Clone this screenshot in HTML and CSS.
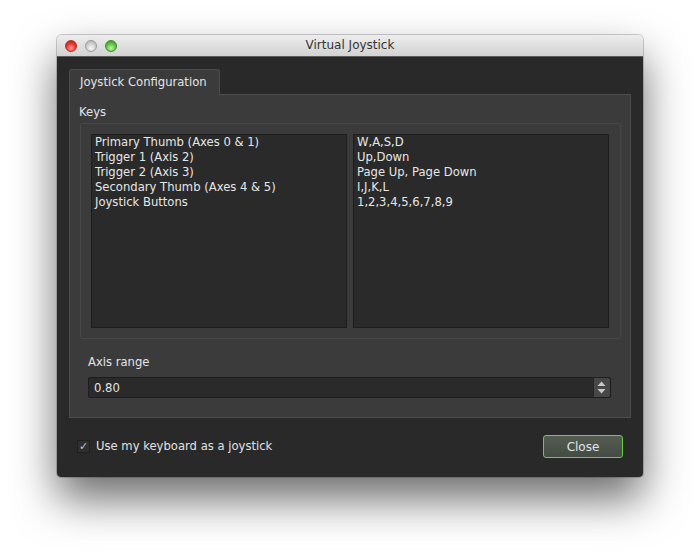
FILE: index.html
```html
<!DOCTYPE html>
<html>
<head>
<meta charset="utf-8">
<link rel="stylesheet" href="styles.css">
</head>
<body>
<div class="window">
  <div class="titlebar">
    <div class="lights">
      <span class="light red"></span>
      <span class="light gray"></span>
      <span class="light green"></span>
    </div>
    <div class="title">Virtual Joystick</div>
  </div>
  <div class="wbody">
    <div class="tabs"><div class="tab">Joystick Configuration</div></div>
    <div class="pane">
      <div class="label keys">Keys</div>
      <div class="group">
        <div class="list">
          <div>Primary Thumb (Axes 0 &amp; 1)</div>
          <div>Trigger 1 (Axis 2)</div>
          <div>Trigger 2 (Axis 3)</div>
          <div>Secondary Thumb (Axes 4 &amp; 5)</div>
          <div>Joystick Buttons</div>
        </div>
        <div class="list">
          <div>W,A,S,D</div>
          <div>Up,Down</div>
          <div>Page Up, Page Down</div>
          <div>I,J,K,L</div>
          <div>1,2,3,4,5,6,7,8,9</div>
        </div>
      </div>
      <div class="label axis">Axis range</div>
      <div class="spin">
        <span class="value">0.80</span>
        <span class="arrows">
          <svg width="15" height="19" viewBox="0 0 15 19"><polygon points="3.5,8 11.5,8 7.5,3.5" fill="#c8c8c8"/><polygon points="3.5,11 11.5,11 7.5,15.5" fill="#c8c8c8"/></svg>
        </span>
      </div>
    </div>
    <div class="bottom">
      <label class="check"><span class="box">✓</span><span>Use my keyboard as a joystick</span></label>
      <button class="close">Close</button>
    </div>
  </div>
</div>
</body>
</html>
```

FILE: styles.css
```css
html, body {
  margin: 0;
  padding: 0;
  background: #ffffff;
}
body {
  font-family: "DejaVu Sans", "Liberation Sans", sans-serif;
  font-size: 11.6px;
  color: #e2e2e2;
  height: 557px;
  overflow: hidden;
}
.window {
  margin-left: 57px;
  margin-top: 35px;
  width: 586px;
  border-radius: 5px 5px 4px 4px;
  box-shadow: 0 22px 44px rgba(0,0,0,0.58), 0 0 0 1px rgba(0,0,0,0.18);
  overflow: hidden;
}
.titlebar {
  height: 21px;
  background: linear-gradient(#ededed, #d2d2d2);
  border-bottom: 1px solid #5a5a5a;
  position: relative;
  display: flex;
  align-items: center;
  justify-content: center;
}
.lights {
  position: absolute;
  left: 8px;
  top: 5px;
  display: flex;
  gap: 8px;
}
.light {
  width: 12px;
  height: 12px;
  border-radius: 50%;
  box-sizing: border-box;
}
.red {
  background: radial-gradient(circle at 50% 72%, #ff9a90 0%, #e2352e 55%, #b3211c 100%);
  border: 1px solid #a8302b;
}
.gray {
  background: radial-gradient(circle at 50% 72%, #f7f7f7 0%, #cdcdcd 55%, #a9a9a9 100%);
  border: 1px solid #9a9a9a;
}
.green {
  background: radial-gradient(circle at 50% 72%, #c2f5a6 0%, #5cbf3c 55%, #3c8d25 100%);
  border: 1px solid #3f8a2b;
}
.title {
  font-size: 12px;
  color: #333333;
  line-height: 21px;
}
.wbody {
  background: #292929;
  padding: 12px 12px 19px 12px;
}
.tabs {
  display: flex;
  height: 26px;
  margin-bottom: -1px;
  position: relative;
  z-index: 1;
}
.tab {
  width: 151px;
  height: 26px;
  box-sizing: border-box;
  background: #3b3b3b;
  border: 1px solid #4c4c4c;
  border-bottom: none;
  border-radius: 3px 3px 0 0;
  padding: 5px 0 0 10px;
  line-height: 15px;
  color: #e4e4e4;
}
.pane {
  background: #3b3b3b;
  border: 1px solid #4c4c4c;
  padding: 0 9px 19px 10px;
}
.label {
  line-height: 15px;
  color: #e2e4ea;
}
.keys {
  margin-top: 10px;
  margin-left: -1px;
}
.group {
  margin-top: 3px;
  height: 216px;
  box-sizing: border-box;
  border: 1px solid #474747;
  border-radius: 2px;
  padding: 10px 11px 10px 10px;
  display: flex;
  gap: 6px;
}
.list {
  flex: 1;
  background: #2a2a2a;
  border: 1px solid #1d1d1d;
  padding: 0 3px;
  line-height: 15px;
  color: #e6e6e6;
}
.axis {
  margin-top: 16px;
  margin-left: 8px;
}
.spin {
  margin: 7px 10px 0 8px;
  height: 21px;
  box-sizing: border-box;
  background: #2a2a2a;
  border: 1px solid #1d1d1d;
  border-radius: 2px;
  display: flex;
  align-items: center;
  justify-content: space-between;
}
.value {
  padding-left: 5px;
  color: #e6e6e6;
}
.arrows {
  width: 16px;
  height: 19px;
  background: #474747;
  border-left: 1px solid #252525;
  border-radius: 0 2px 2px 0;
  display: flex;
}
.bottom {
  margin-top: 17px;
  padding: 0 8px;
  display: flex;
  align-items: center;
  justify-content: space-between;
}
.check {
  display: flex;
  align-items: center;
  gap: 6px;
  margin-top: -1px;
}
.box {
  width: 13px;
  height: 13px;
  box-sizing: border-box;
  border: 1px solid #1f1f1f;
  background: #2f2f2f;
  color: #c4c4c4;
  font-size: 11px;
  line-height: 11px;
  text-align: center;
}
.close {
  width: 80px;
  height: 23px;
  border: 1px solid #62d041;
  border-radius: 3px;
  background: linear-gradient(#545d52, #444b43);
  color: #e0e4ea;
  font-family: "DejaVu Sans", "Liberation Sans", sans-serif;
  font-size: 12px;
  padding: 0;
}
```
